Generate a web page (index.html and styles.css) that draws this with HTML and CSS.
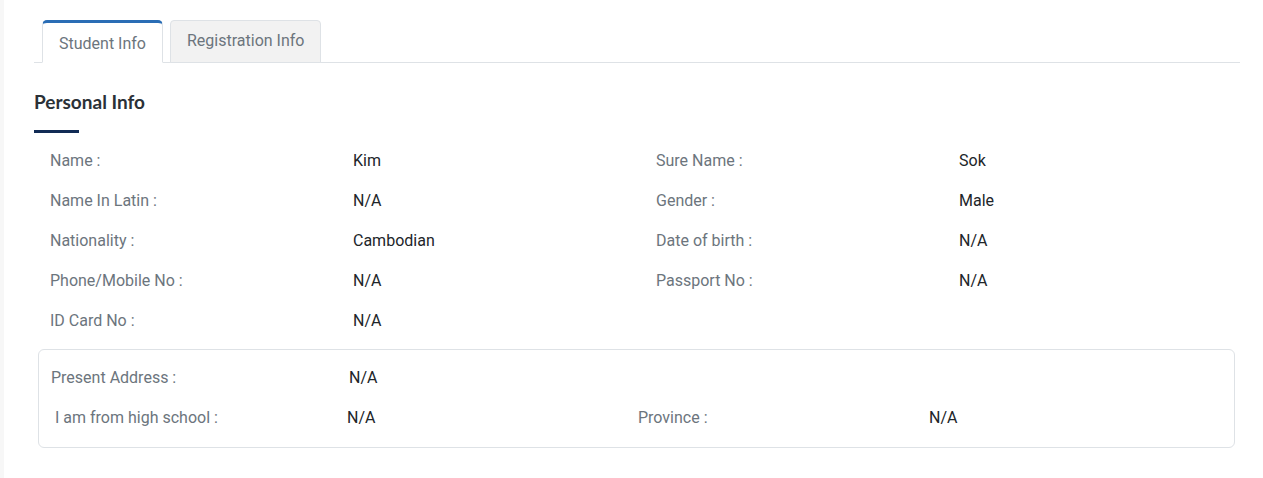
FILE: index.html
```html
<!DOCTYPE html>
<html lang="en">
<head>
<meta charset="utf-8">
<title>Student Info</title>
<link rel="stylesheet" href="styles.css">
</head>
<body>
<div class="page">
  <div class="card">
    <ul class="tabs">
      <li class="tab active">Student Info</li>
      <li class="tab">Registration Info</li>
    </ul>
    <h2 class="section-title">Personal Info</h2>
    <div class="info-grid">
      <div class="label">Name :</div><div class="value">Kim</div>
      <div class="label">Sure Name :</div><div class="value">Sok</div>
      <div class="label">Name In Latin :</div><div class="value">N/A</div>
      <div class="label">Gender :</div><div class="value">Male</div>
      <div class="label">Nationality :</div><div class="value">Cambodian</div>
      <div class="label">Date of birth :</div><div class="value">N/A</div>
      <div class="label">Phone/Mobile No :</div><div class="value">N/A</div>
      <div class="label">Passport No :</div><div class="value">N/A</div>
      <div class="label">ID Card No :</div><div class="value">N/A</div>
    </div>
    <div class="address-box">
      <div class="addr-row addr-row-1">
        <div class="label">Present Address :</div><div class="value">N/A</div>
      </div>
      <div class="addr-row addr-row-2">
        <div class="label">I am from high school :</div><div class="value">N/A</div>
        <div class="label">Province :</div><div class="value">N/A</div>
      </div>
    </div>
  </div>
</div>
</body>
</html>
```

FILE: styles.css
```css
* { box-sizing: border-box; }

html, body {
  margin: 0;
  padding: 0;
  height: 100%;
}

body {
  font-family: Roboto, "Liberation Sans", Arial, sans-serif;
  font-size: 16px;
  color: #212529;
  background: #f7f7f7;
}

.page {
  min-height: 100%;
  padding-left: 4px;
}

.card {
  background: #ffffff;
  min-height: 478px;
  padding: 20px 23px 0 30px;
}

.tabs {
  list-style: none;
  margin: 0;
  padding: 0 0 0 8px;
  display: flex;
  gap: 7px;
  border-bottom: 1px solid #dee2e6;
  height: 43px;
}

.tab {
  height: 43px;
  padding: 0 16px 2px;
  display: flex;
  align-items: center;
  color: #6c757d;
  background: #f2f2f2;
  border: 1px solid #dee2e6;
  border-radius: 4px 4px 0 0;
  line-height: 1;
}

.tab.active {
  background: #ffffff;
  border-top: 3px solid #2a6db5;
  border-bottom-color: #ffffff;
  padding: 2px 16px 0;
  border-radius: 5px 5px 0 0;
}

.section-title {
  margin: 0;
  padding-top: 28px;
  font-family: "Source Sans Pro", Lato, "Open Sans", sans-serif;
  font-weight: 700;
  font-size: 19px;
  line-height: 22px;
  color: #2b3137;
}

.section-title::after {
  content: "";
  display: block;
  width: 45px;
  height: 3px;
  background: #112b55;
  margin-top: 17px;
}

.info-grid {
  display: grid;
  grid-template-columns: 303px 303px 303px 303px;
  grid-auto-rows: 40px;
  padding: 7px 0 0 16px;
}

.label, .value {
  display: flex;
  align-items: center;
  white-space: nowrap;
}

.label { color: #6c757d; }
.value { color: #212529; }

.address-box {
  margin: 9px 5px 0 4px;
  border: 1px solid #dee2e6;
  border-radius: 6px;
  padding: 7px 0 10px 0;
}

.addr-row {
  display: grid;
  grid-auto-rows: 40px;
}

.addr-row-1 {
  grid-template-columns: 298px 300px;
  padding-left: 12px;
}

.addr-row-2 {
  grid-template-columns: 292px 291px 291px 291px;
  padding-left: 16px;
}
```
